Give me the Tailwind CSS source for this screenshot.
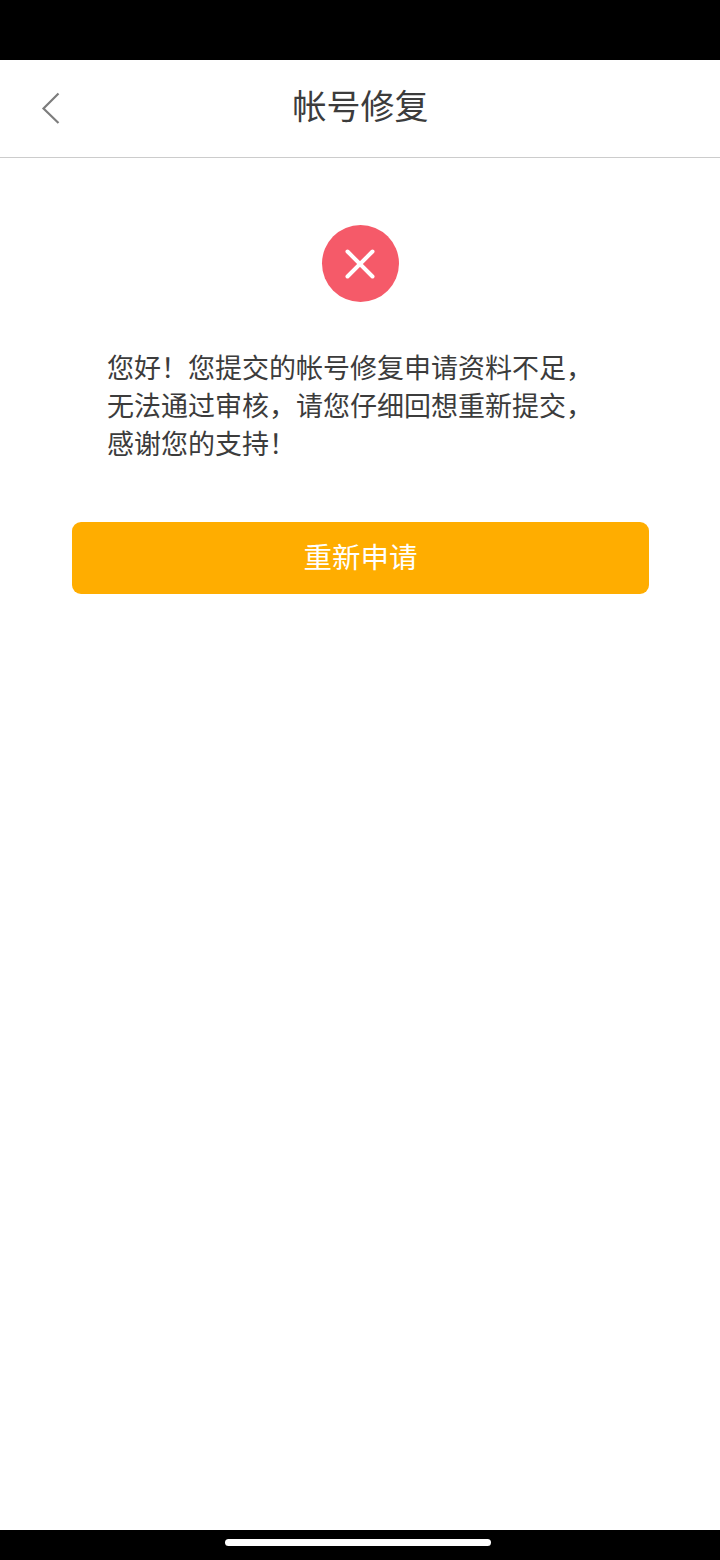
<!DOCTYPE html>
<html lang="zh-CN">
<head>
<meta charset="UTF-8" />
<meta name="viewport" content="width=device-width, initial-scale=1.0" />
<title>帐号修复</title>
<script src="https://cdn.jsdelivr.net/npm/@tailwindcss/browser@4"></script>
</head>
<body class="bg-white">
<div class="flex flex-col h-[1560px] w-[720px] overflow-hidden font-['Noto_Sans_CJK_SC','Noto_Sans',sans-serif]">

  <div class="h-[60px] bg-black shrink-0"></div>

  <!-- header -->
  <div class="relative flex items-center justify-center h-[98px] shrink-0 border-b border-[#cccccc] bg-white">
    <svg class="absolute left-[40px] top-[31px]" width="22" height="34" viewBox="0 0 22 34" fill="none">
      <path d="M18.5 2.5 L3.5 17.5 L18.5 32" stroke="#7d7d7d" stroke-width="2.2" />
    </svg>
    <p class="text-[34px] leading-none text-[#3c3c3c] mb-[7px] ml-[1px]">帐号修复</p>
  </div>

  <!-- content -->
  <div class="flex-1 flex flex-col items-center pt-[67px]">
    <div class="flex items-center justify-center w-[77px] h-[77px] rounded-full bg-[#f55a69]">
      <svg width="32" height="32" viewBox="0 0 32 32" fill="none">
        <path d="M3.5 3.5 L28.5 28.5 M28.5 3.5 L3.5 28.5" stroke="#fff" stroke-width="4" stroke-linecap="round" />
      </svg>
    </div>
    <div class="w-full pl-[107px] pr-[130px] mt-[46px] text-[27px] leading-[38px] text-[#3c3c3c]">
      <p class="whitespace-nowrap">您好！您提交的帐号修复申请资料不足，</p>
      <p class="whitespace-nowrap">无法通过审核，请您仔细回想重新提交，</p>
      <p class="whitespace-nowrap">感谢您的支持！</p>
    </div>
    <button class="flex items-center justify-center w-[577px] h-[72px] mt-[60px] pb-[4px] pl-[1px] rounded-[9px] bg-[#ffad00] text-[28.5px] text-white">重新申请</button>
  </div>

  <!-- nav bar -->
  <div class="flex items-center justify-center h-[30px] shrink-0 bg-black">
    <div class="w-[266px] h-[7px] rounded-full bg-white ml-[-4px] mt-[-6px]"></div>
  </div>
</div>
</body>
</html>
